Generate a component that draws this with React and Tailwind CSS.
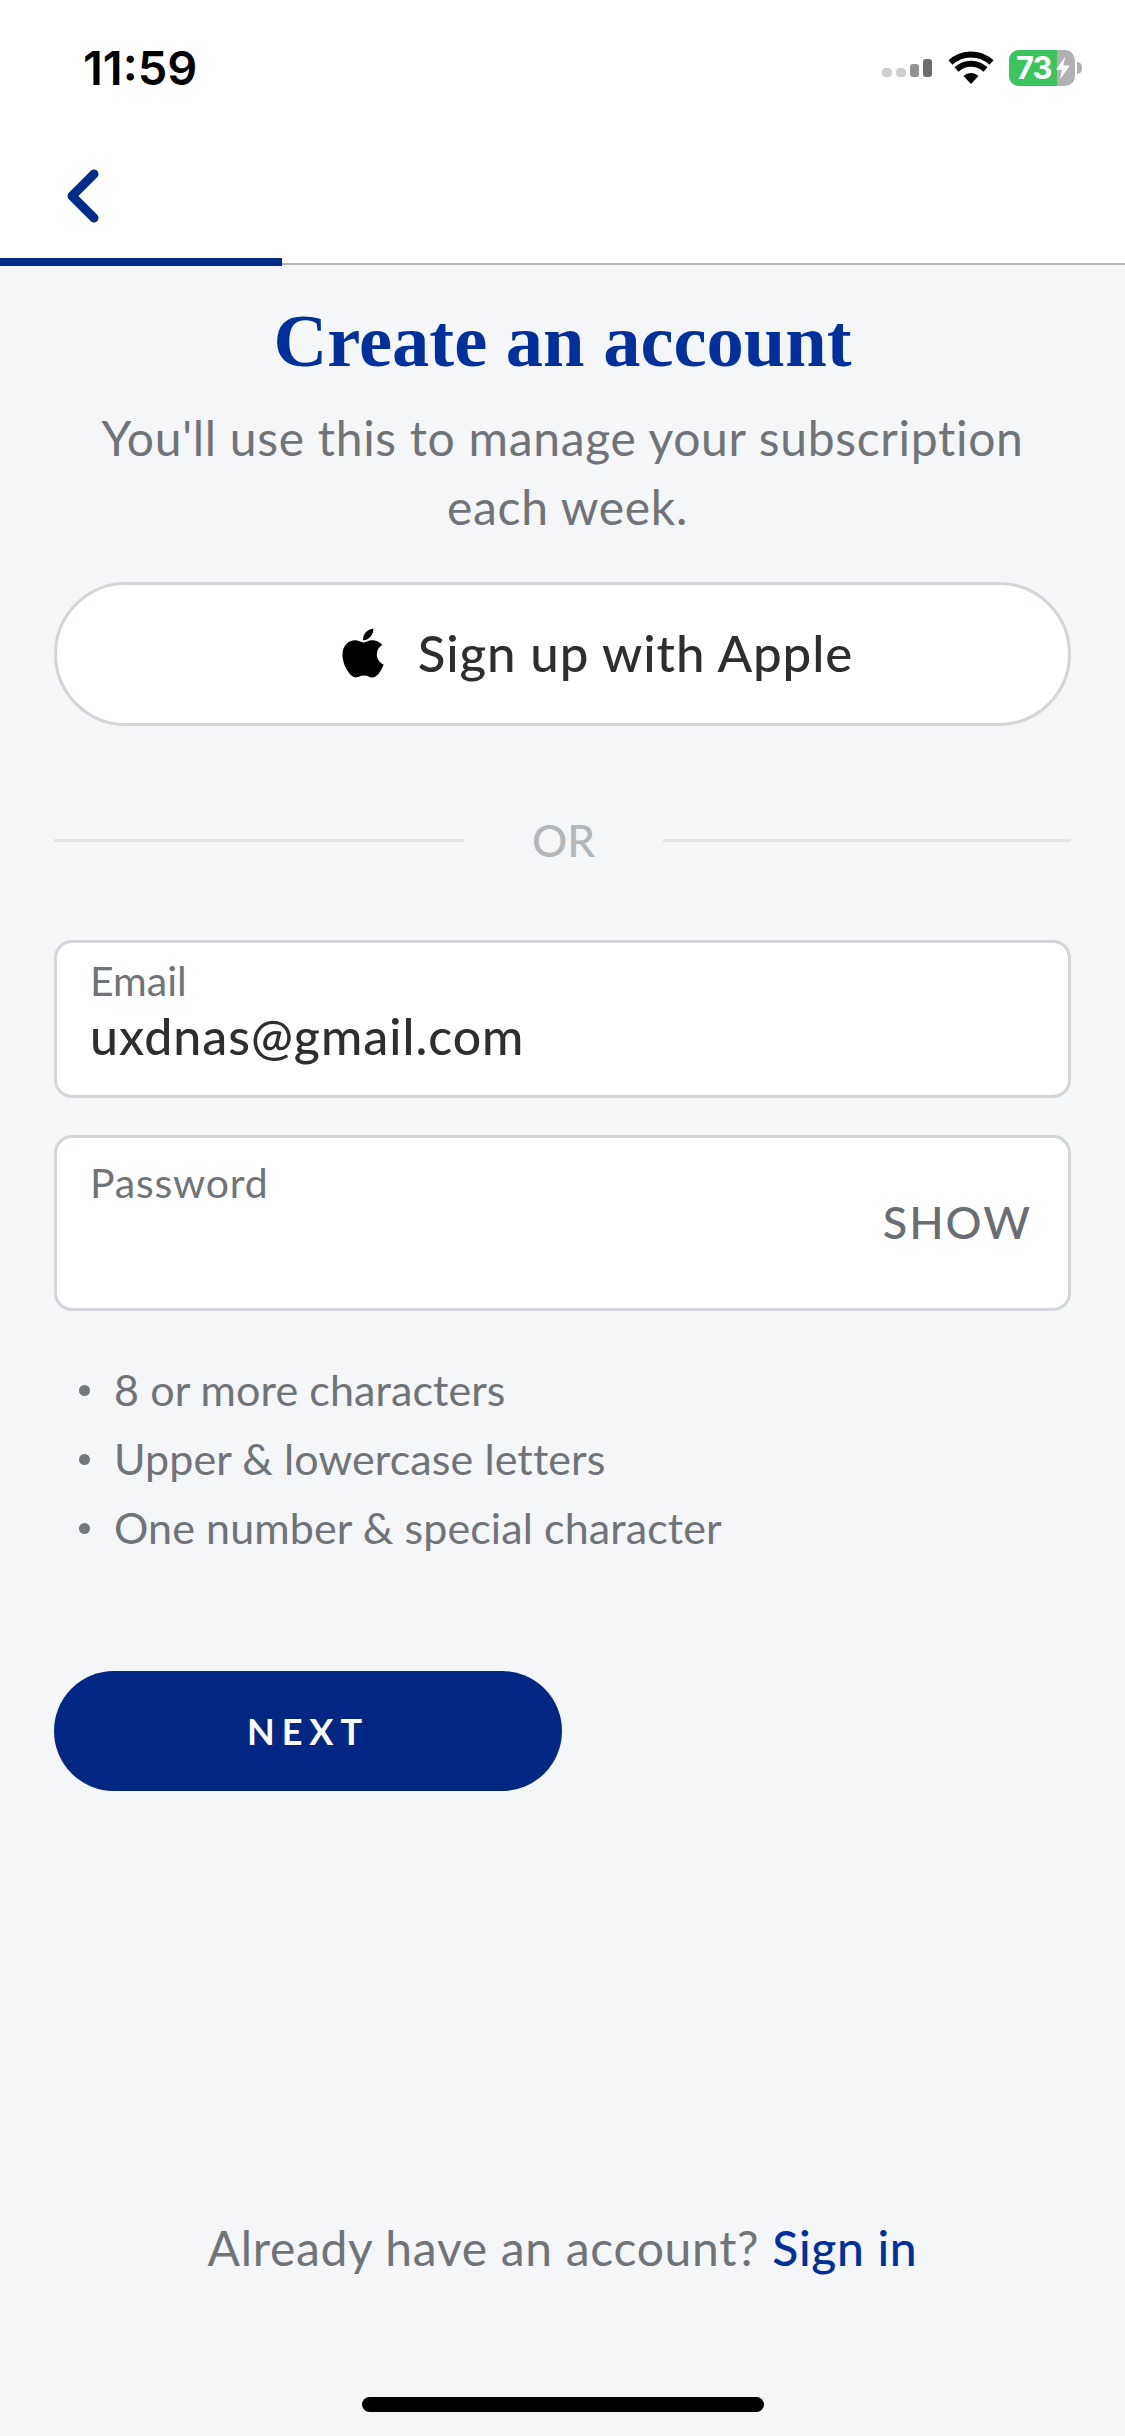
import React from "react";
import { FaApple } from "react-icons/fa";

const rules = ["8 or more characters", "Upper & lowercase letters", "One number & special character"];

function StatusBar() {
  return (
    <div className="flex h-[136px] items-center justify-between pb-[1px] pl-[83px] pr-[43px]">
      <span className="font-['Inter',sans-serif] text-[47px] font-semibold leading-none text-black">11:59</span>
      <div className="flex items-center">
        {/* signal */}
        <svg width="52" height="20" viewBox="0 0 52 20" className="mr-[14px] mt-[2px]">
          <rect x="0" y="9" width="10" height="9" rx="4" fill="#cfcfcf" />
          <rect x="14" y="9" width="10" height="9" rx="4" fill="#cfcfcf" />
          <rect x="28" y="5" width="9" height="13" rx="3" fill="#929292" />
          <rect x="41" y="0" width="9" height="18" rx="3" fill="#6d6d6d" />
        </svg>
        {/* wifi */}
        <svg width="46" height="34" viewBox="0 0 46 34" className="mr-[15px]">
          <path d="M23 33 L15.5 25 A11 11 0 0 1 30.5 25 Z" fill="#000" />
          <path d="M8.5 18.5 A21 21 0 0 1 37.5 18.5" fill="none" stroke="#000" strokeWidth="6" />
          <path d="M2.5 11.5 A30 30 0 0 1 43.5 11.5" fill="none" stroke="#000" strokeWidth="6" />
        </svg>
        {/* battery */}
        <div className="relative flex h-[36px] w-[66px] overflow-hidden rounded-[10px] bg-[#b1b1b1]">
          <div className="flex h-full w-[48px] items-center bg-[#3cc45f] pl-[7px]">
            <span className="font-['Inter',sans-serif] text-[31px] font-bold leading-none tracking-[-1px] text-white">73</span>
          </div>
          <svg width="16" height="24" viewBox="0 0 16 28" preserveAspectRatio="none" className="absolute left-[46px] top-[6px]">
            <path d="M10 1 L1 16 H7 L5 27 L15 11 H8.5 Z" fill="#fff" />
          </svg>
        </div>
        <div className="ml-[2px] h-[12px] w-[5px] rounded-r-full bg-[#b1b1b1]" />
      </div>
    </div>
  );
}

function NavBar() {
  return (
    <div className="relative h-[129px] border-b-2 border-[#b4b7ba] bg-white pl-[65px] pt-[33px]">
      <svg width="36" height="56" viewBox="0 0 36 56">
        <path d="M29 5 L7 27 L29 49" fill="none" stroke="#002d8b" strokeWidth="9" strokeLinecap="round" strokeLinejoin="round" />
      </svg>
      <div className="absolute bottom-[-3px] left-0 h-[8px] w-[282px] bg-[#012b89]" />
    </div>
  );
}

export default function App() {
  return (
    <div className="flex h-[2436px] w-[1125px] flex-col overflow-hidden bg-[#f4f6f8] font-['Lato',sans-serif]">
      <div className="bg-white">
        <StatusBar />
        <NavBar />
      </div>

      <div className="flex flex-1 flex-col px-[54px]">
        <h1 className="mt-[40px] text-center font-['Liberation_Serif',serif] text-[74.5px] font-bold leading-[72px] text-[#012f9b]">
          Create an account
        </h1>
        <p className="mt-[26px] text-center text-[48px] leading-[69px] tracking-[0.7px] text-[#707377]">
          You'll use this to manage your subscription
          <br />
          <span className="inline-block pl-[10px]">each week.</span>
        </p>

        <button className="mt-[41px] flex h-[144px] w-full items-center justify-center gap-[27px] rounded-full border-[3px] border-[#d3d5d8] bg-white pb-[2px] pl-[63px]">
          <FaApple className="h-[56px] w-[56px] text-black" />
          <span className="text-[51px] font-medium tracking-[0.9px] text-[#2e2e30]">Sign up with Apple</span>
        </button>

        <div className="mt-[89px] flex items-center">
          <div className="h-[3px] w-[410px] bg-[#e2e4e7]" />
          <span className="flex-1 text-center text-[44px] font-medium leading-[50px] text-[#b4b7ba]">OR</span>
          <div className="h-[3px] w-[408px] bg-[#e2e4e7]" />
        </div>

        <div className="mt-[75px] h-[158px] rounded-[18px] border-[3px] border-[#d3d5d8] bg-white pl-[33px] pt-[15px]">
          <div className="text-[41px] leading-[46px] text-[#707377]">Email</div>
          <div className="mt-[4px] text-[50px] font-medium leading-[56px] tracking-[1px] text-[#2e2e30]">uxdnas@gmail.com</div>
        </div>

        <div className="mt-[37px] flex h-[176px] justify-between rounded-[18px] border-[3px] border-[#d3d5d8] bg-white pl-[33px] pr-[36px] pt-[22px]">
          <div className="text-[41px] leading-[46px] tracking-[0.8px] text-[#707377]">Password</div>
          <div className="mt-[34px] text-[45px] font-medium leading-[56px] tracking-[2px] text-[#6a6d71]">SHOW</div>
        </div>

        <ul className="mt-[45px] flex flex-col">
          {rules.map((rule) => (
            <li key={rule} className="flex h-[69px] items-center text-[43px] tracking-[0.1px] text-[#707377]">
              <span className="ml-[25px] mr-[24px] h-[11px] w-[11px] rounded-full bg-[#74777b]" />
              {rule}
            </li>
          ))}
        </ul>

        <button className="mt-[108px] flex h-[120px] w-[508px] items-center justify-center rounded-full bg-[#012782] text-[36px] font-bold tracking-[7px] text-white">
          NEXT
        </button>

        <p className="mt-auto text-center text-[48px] leading-[56px] tracking-[0.7px] text-[#707377]">
          Already have an account? <span className="font-medium text-[#012f9b]">Sign in</span>
        </p>
        <div className="mx-auto mb-[24px] mt-[121px] h-[15px] w-[402px] rounded-full bg-black" />
      </div>
    </div>
  );
}
